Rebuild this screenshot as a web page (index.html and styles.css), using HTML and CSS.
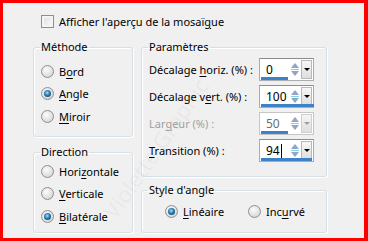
FILE: index.html
```html
<!DOCTYPE html>
<html>
<head>
    <title>Mosaïque</title>
    <link rel="stylesheet" href="styles.css">
</head>
<body>
    <div class="frame">
        <label class="check"><span class="box"></span><span>Afficher l'aperçu de la mosaï<u>g</u>ue</span></label>

        <div class="columns">
            <div class="col-left">
                <fieldset class="group methode">
                    <legend>Méthode</legend>
                    <div class="radio"><span class="dot"></span><span>B<u>o</u>rd</span></div>
                    <div class="radio"><span class="dot on"></span><span><u>A</u>ngle</span></div>
                    <div class="radio"><span class="dot"></span><span><u>M</u>iroir</span></div>
                </fieldset>
                <fieldset class="group direction">
                    <legend>Direction</legend>
                    <div class="radio"><span class="dot"></span><span>Hori<u>z</u>ontale</span></div>
                    <div class="radio"><span class="dot"></span><span><u>V</u>erticale</span></div>
                    <div class="radio"><span class="dot on"></span><span><u>B</u>ilatérale</span></div>
                </fieldset>
            </div>

            <div class="col-right">
                <fieldset class="group params">
                    <legend>Paramètres</legend>
                    <div class="row">
                        <span class="lbl">Décalage <u>h</u>oriz. (%) :</span>
                        <div class="spin">
                            <span class="val">0</span>
                            <span class="arrows"><i class="up"></i><i class="down"></i></span>
                            <span class="drop"></span>
                            <span class="bar" style="width: 27px"></span>
                        </div>
                    </div>
                    <div class="row">
                        <span class="lbl">Décalage v<u>e</u>rt. (%) :</span>
                        <div class="spin">
                            <span class="val">100</span>
                            <span class="arrows"><i class="up"></i><i class="down"></i></span>
                            <span class="drop"></span>
                            <span class="bar" style="width: 53px"></span>
                        </div>
                    </div>
                    <div class="row disabled">
                        <span class="lbl">Lar<u>g</u>eur (%) :</span>
                        <div class="spin">
                            <span class="val">50</span>
                            <span class="arrows"><i class="up"></i><i class="down"></i></span>
                            <span class="drop"></span>
                            <span class="bar" style="width: 27px"></span>
                        </div>
                    </div>
                    <div class="row">
                        <span class="lbl"><u>T</u>ransition (%) :</span>
                        <div class="spin">
                            <span class="val">94<span class="caret"></span></span>
                            <span class="arrows"><i class="up"></i><i class="down"></i></span>
                            <span class="drop"></span>
                            <span class="bar" style="width: 51px"></span>
                        </div>
                    </div>
                </fieldset>
                <fieldset class="group style">
                    <legend>Style d'angle</legend>
                    <div class="inline">
                        <div class="radio"><span class="dot on"></span><span><u>L</u>inéaire</span></div>
                        <div class="radio"><span class="dot"></span><span>Inc<u>u</u>rvé</span></div>
                    </div>
                </fieldset>
            </div>
        </div>

        <span class="watermark">Violette Graphic</span>
    </div>
</body>
</html>
```

FILE: styles.css
```css
body { margin: 0; font-family: "Noto Sans", sans-serif; font-size: 11px; color: #000; }
u { text-decoration-thickness: 1px; text-underline-offset: 2px; }

.frame {
    width: 361px;
    height: 235px;
    border: 3px solid #f00;
    border-right-width: 4px;
    background: #f0f0f0;
    position: relative;
    overflow: hidden;
}

.check {
    display: flex;
    align-items: center;
    gap: 5px;
    height: 18px;
    margin: 9px 0 0 38px;
}
.box {
    flex-shrink: 0;
    width: 11px;
    height: 11px;
    border: 1px solid #8e8f8f;
    background: linear-gradient(135deg, #dcdcdc, #fbfbfb);
    box-shadow: inset 0 0 0 2px #f4f4f4;
}

.columns { display: flex; gap: 8px; margin: 9px 0 0 30px; }
.col-left, .col-right { display: flex; flex-direction: column; }
.col-left { gap: 7px; width: 100px; }
.col-right { gap: 5px; width: 186px; }

.group {
    margin: 0;
    padding: 0 7px;
    min-width: 0;
    box-sizing: border-box;
    border: 1px solid #d5dfe5;
    border-radius: 3px;
    box-shadow: inset 1px 1px 0 #fff, 1px 1px 0 #fff;
}
.group legend { padding: 0 1px; margin-left: -1px; line-height: 16px; }
.methode { height: 98px; padding-top: 5px; }
.direction { height: 89px; }
.params { height: 138px; padding-top: 1px; }
.style { height: 51px; }

.radio { display: flex; align-items: center; gap: 5px; height: 22.5px; white-space: nowrap; }
.dot {
    flex-shrink: 0;
    width: 11px;
    height: 11px;
    border: 1px solid #8e8f8f;
    border-radius: 50%;
    background: radial-gradient(circle at 40% 35%, #fcfcfc, #d6d6d6 80%);
    display: flex;
    align-items: center;
    justify-content: center;
}
.dot.on::after {
    content: "";
    width: 7px;
    height: 7px;
    border-radius: 50%;
    background: radial-gradient(circle at 45% 40%, #a6e3ff, #2a7ab0 45%, #0d3d62 90%);
}

.row {
    display: grid;
    grid-template-columns: 110px 55px;
    align-items: center;
    height: 27px;
}
.lbl { white-space: nowrap; }
.spin {
    position: relative;
    height: 23px;
    box-sizing: border-box;
    border: 1px solid #abadb3;
    border-top-color: #8b8d93;
    background: #fff;
    display: flex;
    align-items: center;
    font-size: 12px;
}
.val { flex: 1; padding-left: 6px; display: flex; align-items: center; }
.caret { width: 1px; height: 14px; background: #000; margin-left: 1px; }
.arrows { display: flex; flex-direction: column; align-items: center; gap: 2px; width: 10px; margin-right: 1px; }
.arrows i { width: 0; height: 0; border-left: 4px solid transparent; border-right: 4px solid transparent; }
.arrows .up { border-bottom: 5px solid #8fa6c6; }
.arrows .down { border-top: 5px solid #8fa6c6; order: 2; }
.arrows::before { content: ""; order: 1; width: 8px; height: 1px; background: #7fd7e8; margin: -1px 0; }
.drop {
    width: 9px;
    height: 17px;
    margin-right: 1px;
    border: 1px solid #b8b8b8;
    background: linear-gradient(#f6f6f6, #dedede);
    display: flex;
    align-items: center;
    justify-content: center;
}
.drop::after { content: ""; border-left: 3px solid transparent; border-right: 3px solid transparent; border-top: 3px solid #000; }
.bar { position: absolute; left: 1px; bottom: 0; height: 3px; background: #3d82c8; }

.disabled .lbl { color: #a0a0a0; }
.disabled .spin { border-color: #c5c5c5; }
.disabled .val { color: #6d6d6d; }
.disabled .drop::after { border-top-color: #a0a0a0; }
.disabled .drop { border-color: #cfcfcf; }

.inline { display: flex; padding: 2px 0 0 16px; }
.inline .radio:first-child { width: 83px; }

.watermark {
    position: absolute;
    left: 70px;
    top: 130px;
    font-size: 22px;
    color: rgba(0, 0, 0, 0.05);
    transform: rotate(-55deg);
    pointer-events: none;
    white-space: nowrap;
}
```
